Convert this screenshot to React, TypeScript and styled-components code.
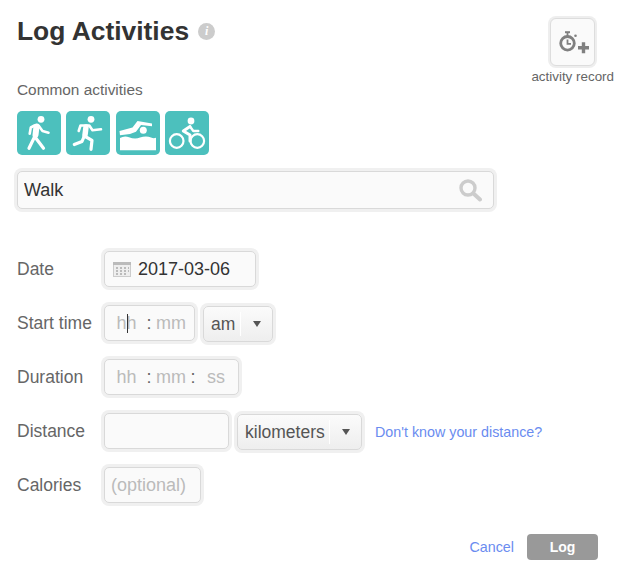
import * as React from "react";
import styled, { createGlobalStyle } from "styled-components";

const GlobalStyle = createGlobalStyle`
  html, body {
    margin: 0;
    padding: 0;
    background: #fff;
  }

  body {
    font-family: "Liberation Sans", Arial, sans-serif;
    color: #333;
  }
`;

const Page = styled.div`
  position: relative;
  box-sizing: border-box;
  width: 624px;
  height: 586px;
  padding: 0 26px 0 17px;
  overflow: hidden;
`;

const Header = styled.header`
  display: flex;
  justify-content: space-between;
  align-items: flex-start;
  height: 78px;
  margin-right: -16px;
`;

const Title = styled.h1`
  display: flex;
  align-items: center;
  gap: 9px;
  margin: 16px 0 0;
  font-size: 26.4px;
  line-height: 30px;
  font-weight: bold;
  color: #333;
`;

const InfoBadge = styled.span`
  display: block;
  width: 17px;
  height: 17px;
  border-radius: 50%;
  background: #ccc;
  color: #fff;
  font: italic bold 12px/17px "Liberation Serif", serif;
  text-align: center;
`;

const RecordLink = styled.a`
  display: flex;
  flex-direction: column;
  align-items: center;
  margin-top: 18px;
  font-size: 13.4px;
  line-height: 14px;
  color: #666;
  gap: 4px;
`;

const RecordButton = styled.span`
  display: flex;
  align-items: center;
  justify-content: center;
  box-sizing: border-box;
  width: 45px;
  height: 48px;
  border: 1px solid #ddd;
  border-radius: 6px;
  background: #fafafa;
  box-shadow: 0 0 0 2px #eee;
`;

const SectionLabel = styled.div`
  margin-top: 3px;
  font-size: 15.4px;
  line-height: 18px;
  color: #666;
`;

const ActivityRow = styled.div`
  display: flex;
  margin-top: 12px;
`;

const ActivityTile = styled.button<{ $gap?: number }>`
  display: block;
  width: 44px;
  height: 44px;
  padding: 0;
  margin-right: ${(p) => p.$gap ?? 5}px;
  border: 0;
  border-radius: 5px;
  background: #4cc0bd;
`;

const Field = styled.div<{ $width: number }>`
  position: relative;
  display: flex;
  align-items: center;
  box-sizing: border-box;
  width: ${(p) => p.$width}px;
  height: 36px;
  border: 1px solid #d9d9d9;
  border-radius: 5px;
  background: #fafafa;
  box-shadow: 0 0 0 3px #f0f0f0;
`;

const SearchField = styled(Field)`
  height: 38px;
  margin-top: 16px;
  justify-content: space-between;
  padding: 0 11px 0 6px;
`;

const TextInput = styled.input`
  flex: 1;
  min-width: 0;
  padding: 0;
  border: 0;
  outline: 0;
  background: transparent;
  font: 18px "Liberation Sans", Arial, sans-serif;
  color: #333;

  &::placeholder {
    color: #bbb;
    opacity: 1;
  }
`;

const Form = styled.div`
  display: flex;
  flex-direction: column;
  gap: 18px;
  margin-top: 42px;
`;

const Row = styled.div`
  display: flex;
  align-items: flex-start;
  height: 36px;
`;

const Label = styled.label`
  width: 87px;
  font-size: 17.5px;
  line-height: 36px;
  color: #666;
`;

const DateField = styled(Field)`
  padding-left: 8px;
  gap: 7px;
`;

const OptionalField = styled(Field)`
  padding-left: 6px;
`;

const TimeField = styled(Field)`
  padding-left: 2px;
  font-size: 18px;
  color: #bbb;
`;

const TimePart = styled.span<{ $width: number }>`
  width: ${(p) => p.$width}px;
  text-align: center;
`;

const Colon = styled.span`
  width: 6px;
  text-align: center;
  color: #666;
`;

const MouseCaret = styled.span`
  position: absolute;
  left: 22px;
  top: 8px;
  width: 1px;
  height: 19px;
  background: #333;
`;

const Select = styled.div<{ $width: number; $left: number }>`
  display: flex;
  align-items: center;
  box-sizing: border-box;
  width: ${(p) => p.$width}px;
  height: 36px;
  margin: 1px 0 0 ${(p) => p.$left}px;
  padding-left: 7px;
  border: 1px solid #d9d9d9;
  border-radius: 5px;
  background: linear-gradient(#fbfbfb, #eee);
  box-shadow: 0 0 0 3px #f0f0f0;
  font-size: 17.5px;
  color: #555;
`;

const SelectValue = styled.span`
  flex: 1;
`;

const SelectArrow = styled.span`
  display: flex;
  align-items: center;
  justify-content: center;
  width: 31px;
  height: 24px;
  border-left: 1px solid #fff;

  &::after {
    content: "";
    border-left: 4.5px solid transparent;
    border-right: 4.5px solid transparent;
    border-top: 6px solid #555;
  }
`;

const Link = styled.a`
  font-size: 14.3px;
  color: #6a8cf0;
`;

const HelpLink = styled(Link)`
  margin-left: 13px;
  line-height: 38px;
`;

const Footer = styled.footer`
  display: flex;
  justify-content: flex-end;
  align-items: center;
  gap: 13px;
  margin-top: 31px;
`;

const LogButton = styled.button`
  width: 71px;
  height: 26px;
  padding: 0;
  border: 0;
  border-radius: 4px;
  background: #999;
  color: #fff;
  font: bold 14px "Liberation Sans", Arial, sans-serif;
`;

const WalkIcon = () => (
  <svg width="44" height="44" viewBox="0 0 44 44" fill="none" stroke="#fff" strokeWidth="3.2" strokeLinecap="round" strokeLinejoin="round">
    <circle cx="24" cy="8.3" r="3.4" fill="#fff" stroke="none" />
    <path d="M18.5 17 17.5 26 12 37.3M18 26 26.5 37.3" />
    <path d="M17.5 14.5 13.8 16.5 12.7 22.7M21.5 14.5 25.5 20 31.5 21.7" strokeWidth="2.6" />
    <path d="M19.5 15.5 18.5 24" strokeWidth="6" />
  </svg>
);

const RunIcon = () => (
  <svg width="44" height="44" viewBox="0 0 44 44" fill="none" stroke="#fff" strokeWidth="3.2" strokeLinecap="round" strokeLinejoin="round">
    <circle cx="25" cy="8.3" r="3.4" fill="#fff" stroke="none" />
    <path d="M19.5 17 18.3 25 16 30.5 8.3 33.5M18.3 25 26 29.3 25 38.3" />
    <path d="M12.7 20 14.5 14.5 23.3 14.5 26.5 19.3 35 18.3" strokeWidth="2.6" />
    <path d="M20 16 19 24" strokeWidth="5.5" />
  </svg>
);

const SwimIcon = () => (
  <svg width="44" height="44" viewBox="0 0 44 44" fill="none">
    <circle cx="27.3" cy="19.3" r="3.5" fill="#fff" />
    <path d="M3.5 20 16.5 16.5 21.5 10 36 12.4 36 15.2 25 14 20 20.7 14 23 4 24.2Z" fill="#fff" />
    <path d="M4 27 C7 25.2 10 25 13 26.2 C17 28 21 28 24 26.5 C28 25 32 25 35 26.5 C37 27.3 38.5 27.3 40 26.7 L40 39.3 L4 39.3Z" fill="#fff" />
  </svg>
);

const BikeIcon = () => (
  <svg width="44" height="44" viewBox="0 0 44 44" fill="none" stroke="#fff" strokeLinecap="round" strokeLinejoin="round">
    <circle cx="26" cy="10" r="3.4" fill="#fff" stroke="none" />
    <circle cx="11.7" cy="30" r="6.8" strokeWidth="2.2" />
    <circle cx="32.3" cy="30" r="6.8" strokeWidth="2.2" />
    <path d="M25 15.5 18.3 20 25 24 25 30" strokeWidth="3" />
    <path d="M25 15.5 28.3 20 33.3 20" strokeWidth="2.4" />
  </svg>
);

const StopwatchPlusIcon = () => (
  <svg width="36" height="28" viewBox="0 0 36 28" fill="none" stroke="#808080">
    <circle cx="12.5" cy="15.3" r="6.8" strokeWidth="2.8" />
    <path d="M12.5 11.5v4.3h3.5M12.5 5v3" strokeWidth="1.8" />
    <path d="M10 4.2h5" strokeWidth="2" />
    <circle cx="20.5" cy="7.7" r="1.3" fill="#808080" stroke="none" />
    <path d="M23 19.7h11M28.5 14.2v11" strokeWidth="3.4" />
  </svg>
);

const SearchIcon = () => (
  <svg width="24" height="24" viewBox="0 0 24 24" fill="none" stroke="#ccc" strokeLinecap="round">
    <circle cx="10" cy="10" r="7" strokeWidth="3.4" />
    <path d="M16 16l6 5.5" strokeWidth="4" />
  </svg>
);

const CalendarIcon = () => (
  <svg width="18" height="16" viewBox="0 0 18 16" fill="none">
    <rect x="0.5" y="1.5" width="17" height="14" fill="#eee" stroke="#ccc" />
    <rect x="0" y="1" width="18" height="3" fill="#bbb" />
    <path d="M3 6h2v2H3zM7 6h2v2H7zM11 6h2v2h-2zM15 6h1v2h-1zM3 9h2v2H3zM7 9h2v2H7zM11 9h2v2h-2zM15 9h1v2h-1zM3 12h2v2H3zM7 12h2v2H7zM11 12h2v2h-2z" fill="#bbb" />
  </svg>
);

export default function App() {
  return (
    <Page>
      <GlobalStyle />
      <Header>
        <Title>
          Log Activities
          <InfoBadge>i</InfoBadge>
        </Title>
        <RecordLink>
          <RecordButton>
            <StopwatchPlusIcon />
          </RecordButton>
          activity record
        </RecordLink>
      </Header>

      <SectionLabel>Common activities</SectionLabel>
      <ActivityRow>
        <ActivityTile title="Walk">
          <WalkIcon />
        </ActivityTile>
        <ActivityTile title="Run" $gap={6}>
          <RunIcon />
        </ActivityTile>
        <ActivityTile title="Swim">
          <SwimIcon />
        </ActivityTile>
        <ActivityTile title="Bike">
          <BikeIcon />
        </ActivityTile>
      </ActivityRow>

      <SearchField $width={477}>
        <TextInput defaultValue="Walk" />
        <SearchIcon />
      </SearchField>

      <Form>
        <Row>
          <Label>Date</Label>
          <DateField $width={152}>
            <CalendarIcon />
            <TextInput defaultValue="2017-03-06" />
          </DateField>
        </Row>
        <Row>
          <Label>Start time</Label>
          <TimeField $width={91}>
            <TimePart $width={39}>hh</TimePart>
            <Colon>:</Colon>
            <TimePart $width={38}>mm</TimePart>
            <MouseCaret />
          </TimeField>
          <Select $width={70} $left={8}>
            <SelectValue>am</SelectValue>
            <SelectArrow />
          </Select>
        </Row>
        <Row>
          <Label>Duration</Label>
          <TimeField $width={135}>
            <TimePart $width={39}>hh</TimePart>
            <Colon>:</Colon>
            <TimePart $width={38}>mm</TimePart>
            <Colon>:</Colon>
            <TimePart $width={40}>ss</TimePart>
          </TimeField>
        </Row>
        <Row>
          <Label>Distance</Label>
          <Field $width={125} />
          <Select $width={125} $left={8}>
            <SelectValue>kilometers</SelectValue>
            <SelectArrow />
          </Select>
          <HelpLink>Don't know your distance?</HelpLink>
        </Row>
        <Row>
          <Label>Calories</Label>
          <OptionalField $width={97}>
            <TextInput placeholder="(optional)" />
          </OptionalField>
        </Row>
      </Form>

      <Footer>
        <Link>Cancel</Link>
        <LogButton>Log</LogButton>
      </Footer>
    </Page>
  );
}
